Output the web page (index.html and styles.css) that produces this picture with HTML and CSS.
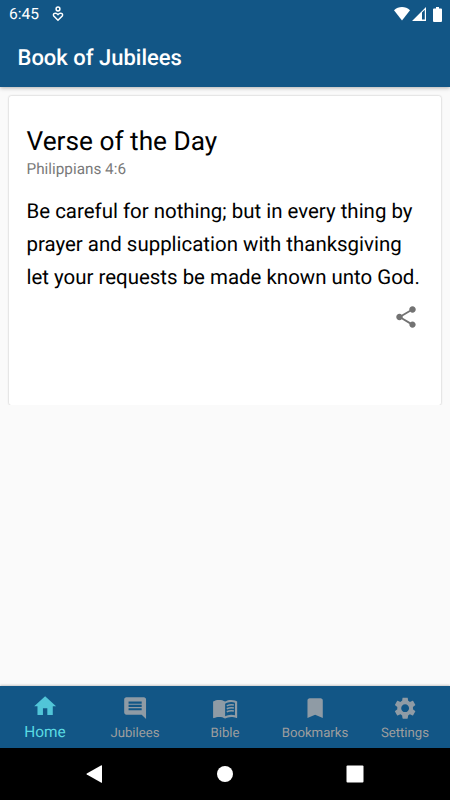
FILE: index.html
```html
<!DOCTYPE html>
<html lang="en">
<head>
  <meta charset="UTF-8" />
  <meta name="viewport" content="width=device-width, initial-scale=1" />
  <title>Book of Jubilees</title>
  <link rel="stylesheet" href="styles.css">
</head>
<body>
  <header class="header">
    <div class="status">
      <span class="time">6:45</span>
      <svg class="notify" viewBox="0 0 12 16">
        <circle cx="6" cy="3" r="1.9" />
        <path d="M6 14.2L1.8 10C.2 7.8 3.8 5.8 6 8.6C8.2 5.8 11.8 7.8 10.2 10z" />
      </svg>
      <svg class="wifi" viewBox="0 0 16 14"><path d="M0 3.2C4.5-1 11.500-1 16 3.200L8 13.500z" /></svg>
      <svg class="signal" viewBox="0 0 14 14">
        <path fill-rule="evenodd" d="M14 0v14H0zM10 5.500v7h2.800v-9.800z" />
      </svg>
      <svg class="battery" viewBox="0 0 9 15"><path d="M3 0h3v1.500h2q1 0 1 1V14q0 1-1 1H1q-1 0-1-1V2.500q0-1 1-1h2z" /></svg>
    </div>
    <h1>Book of Jubilees</h1>
  </header>

  <main>
    <div class="card">
      <h2>Verse of the Day</h2>
      <div class="ref">Philippians 4:6</div>
      <p>Be careful for nothing; but in every thing by prayer and supplication with thanksgiving let your requests be made known unto God.</p>
      <svg class="share" viewBox="0 0 24 24"><path d="M18 16.080c-.76 0-1.440.3-1.960.770L8.910 12.700c.05-.23.09-.46.09-.7s-.04-.47-.09-.7l7.050-4.110c.54.5 1.250.81 2.040.81 1.660 0 3-1.340 3-3s-1.340-3-3-3-3 1.340-3 3c0 .24.04.47.09.7L8.040 9.810C7.500 9.310 6.790 9 6 9c-1.660 0-3 1.340-3 3s1.340 3 3 3c.79 0 1.500-.31 2.040-.81l7.120 4.160c-.05.21-.08.43-.08.65 0 1.610 1.310 2.920 2.920 2.920s2.920-1.310 2.920-2.920-1.310-2.920-2.920-2.920z" /></svg>
    </div>
  </main>

  <nav class="tabs">
    <a class="tab active">
      <svg viewBox="0 0 24 24"><path d="M10 20v-6h4v6h5v-8h3L12 3 2 12h3v8z" /></svg>
      <span>Home</span>
    </a>
    <a class="tab">
      <svg viewBox="0 0 24 24"><path d="M21.990 4c0-1.100-.89-2-1.990-2H4c-1.100 0-2 .9-2 2v12c0 1.100.9 2 2 2h14l4 4-.01-18zM18 14H6v-2h12v2zm0-3H6V9h12v2zm0-3H6V6h12v2z" /></svg>
      <span>Jubilees</span>
    </a>
    <a class="tab">
      <svg viewBox="0 0 24 24">
        <path d="M21 5c-1.110-.35-2.330-.5-3.500-.5-1.950 0-4.050.4-5.500 1.500-1.450-1.100-3.550-1.500-5.500-1.500S2.450 4.900 1 6v14.650c0 .25.25.5.5.5.1 0 .15-.05.25-.05C3.100 20.450 5.050 20 6.500 20c1.950 0 4.050.4 5.500 1.500 1.350-.85 3.800-1.500 5.500-1.500 1.650 0 3.350.3 4.750 1.050.1.05.15.05.25.05.25 0 .5-.25.5-.5V6c-.6-.45-1.250-.75-2-1zm0 13.500c-1.100-.35-2.300-.5-3.500-.5-1.700 0-4.150.65-5.500 1.500V8c1.350-.85 3.800-1.500 5.500-1.500 1.200 0 2.400.15 3.500.5v11.500z" />
        <path class="lines" d="M13.500 9.900q3-1.300 6.500-.7M13.500 12.600q3-1.300 6.500-.7M13.500 15.300q3-1.300 6.500-.7" />
      </svg>
      <span>Bible</span>
    </a>
    <a class="tab">
      <svg viewBox="0 0 24 24"><path d="M17 3H7c-1.100 0-1.990.9-1.990 2L5 21l7-3 7 3V5c0-1.100-.9-2-2-2z" /></svg>
      <span>Bookmarks</span>
    </a>
    <a class="tab">
      <svg viewBox="0 0 24 24"><path d="M19.140 12.940c.04-.3.06-.61.06-.94 0-.32-.02-.64-.07-.94l2.030-1.580c.18-.14.23-.41.12-.61l-1.920-3.320c-.12-.22-.37-.29-.59-.22l-2.390.96c-.5-.38-1.030-.7-1.620-.94l-.36-2.540c-.04-.24-.24-.41-.48-.41h-3.840c-.24 0-.43.17-.47.41l-.36 2.540c-.59.24-1.130.57-1.620.94l-2.390-.96c-.22-.08-.47 0-.59.22L2.740 8.870c-.12.21-.08.47.12.61l2.030 1.580c-.05.3-.09.63-.09.94s.02.64.07.94l-2.030 1.580c-.18.14-.23.41-.12.61l1.920 3.320c.12.22.37.29.59.22l2.390-.96c.5.38 1.030.7 1.620.94l.36 2.540c.05.24.24.41.48.41h3.840c.24 0 .44-.17.47-.41l.36-2.540c.59-.24 1.130-.56 1.620-.94l2.390.96c.22.08.47 0 .59-.22l1.920-3.320c.12-.22.07-.47-.12-.61l-2.010-1.580zM12 15.600c-1.980 0-3.600-1.620-3.600-3.600s1.620-3.600 3.600-3.600 3.600 1.620 3.600 3.600-1.620 3.600-3.600 3.600z" /></svg>
      <span>Settings</span>
    </a>
  </nav>

  <div class="sysnav">
    <svg viewBox="0 0 18 18"><path d="M16 .5v17q0 .5-.6.2L.8 9.500q-.8-.5 0-1L15.400.3q.6-.3.6.2z" /></svg>
    <svg viewBox="0 0 18 18"><circle cx="9" cy="9" r="8" /></svg>
    <svg viewBox="0 0 18 18"><rect x=".5" y=".5" width="17" height="17" rx="1" /></svg>
  </div>
</body>
</html>
```

FILE: styles.css
```css
* {
  box-sizing: border-box;
}
body {
  margin: 0;
  height: 100vh;
  display: flex;
  flex-direction: column;
  background: #fafafa;
  font-family: Roboto, sans-serif;
  text-rendering: geometricPrecision;
  color: #000;
  overflow: hidden;
}
h1, h2, p {
  margin: 0;
  font-weight: 400;
}
.header {
  height: 87px;
  flex: none;
  background: #125686;
  color: #fff;
  box-shadow: 0 1px 4px rgba(0, 0, 0, 0.3);
}
.status {
  height: 28px;
  display: flex;
  align-items: center;
  padding: 0 8px 0 9px;
  fill: #fff;
}
.time {
  font-size: 15.6px;
  line-height: 28px;
}
.notify {
  width: 12px;
  height: 16px;
  margin-left: 13px;
  fill: none;
  stroke: #fff;
  stroke-width: 1.5;
}
.wifi {
  width: 16px;
  height: 14px;
  margin-left: auto;
}
.signal {
  width: 14px;
  height: 14px;
  margin-left: 2px;
}
.battery {
  width: 9px;
  height: 15px;
  margin-left: 7px;
}
h1 {
  padding-left: 17.5px;
  font-size: 22px;
  font-weight: 500;
  line-height: 62px;
}
main {
  flex: 1;
  padding: 9px;
}
.card {
  height: 309px;
  padding: 30px 17.5px 0;
  background: #fff;
  border-radius: 2px;
  box-shadow: 0 0 2px rgba(0, 0, 0, 0.3);
  clip-path: inset(-3px -3px 0 -3px);
  display: flex;
  flex-direction: column;
}
h2 {
  font-size: 26.25px;
  line-height: 32px;
}
.ref {
  margin-top: 1px;
  font-size: 15.3px;
  line-height: 20px;
  color: #7a7a7a;
}
.card p {
  margin-top: 16px;
  margin-right: -2px;
  font-size: 20.46px;
  line-height: 33px;
}
.share {
  width: 26px;
  height: 26px;
  margin: 10px 5px 0 0;
  align-self: flex-end;
  fill: #737373;
}
.tabs {
  height: 62px;
  flex: none;
  display: flex;
  background: #125686;
  box-shadow: 0 -1px 2px rgba(0, 0, 0, 0.2);
}
.tab {
  flex: 1;
  display: flex;
  flex-direction: column;
  align-items: center;
  padding-top: 9px;
  font-size: 13.2px;
  color: #9e9e9e;
  fill: #8f9ba5;
}
.tab svg {
  width: 26.25px;
  height: 26.25px;
  flex: none;
}
.tab span {
  line-height: 20px;
  margin-top: 2.5px;
}
.tab .lines {
  fill: none;
  stroke: #8f9ba5;
  stroke-width: 1.4;
}
.tab.active {
  padding-top: 7px;
  font-size: 15.4px;
  color: #5adbe3;
  fill: #51c5d8;
}
.tab.active span {
  margin-top: 3px;
}
.sysnav {
  height: 52px;
  flex: none;
  display: flex;
  align-items: center;
  justify-content: center;
  gap: 112px;
  background: #000;
  fill: #fff;
}
.sysnav svg {
  width: 18px;
  height: 18px;
}
```
